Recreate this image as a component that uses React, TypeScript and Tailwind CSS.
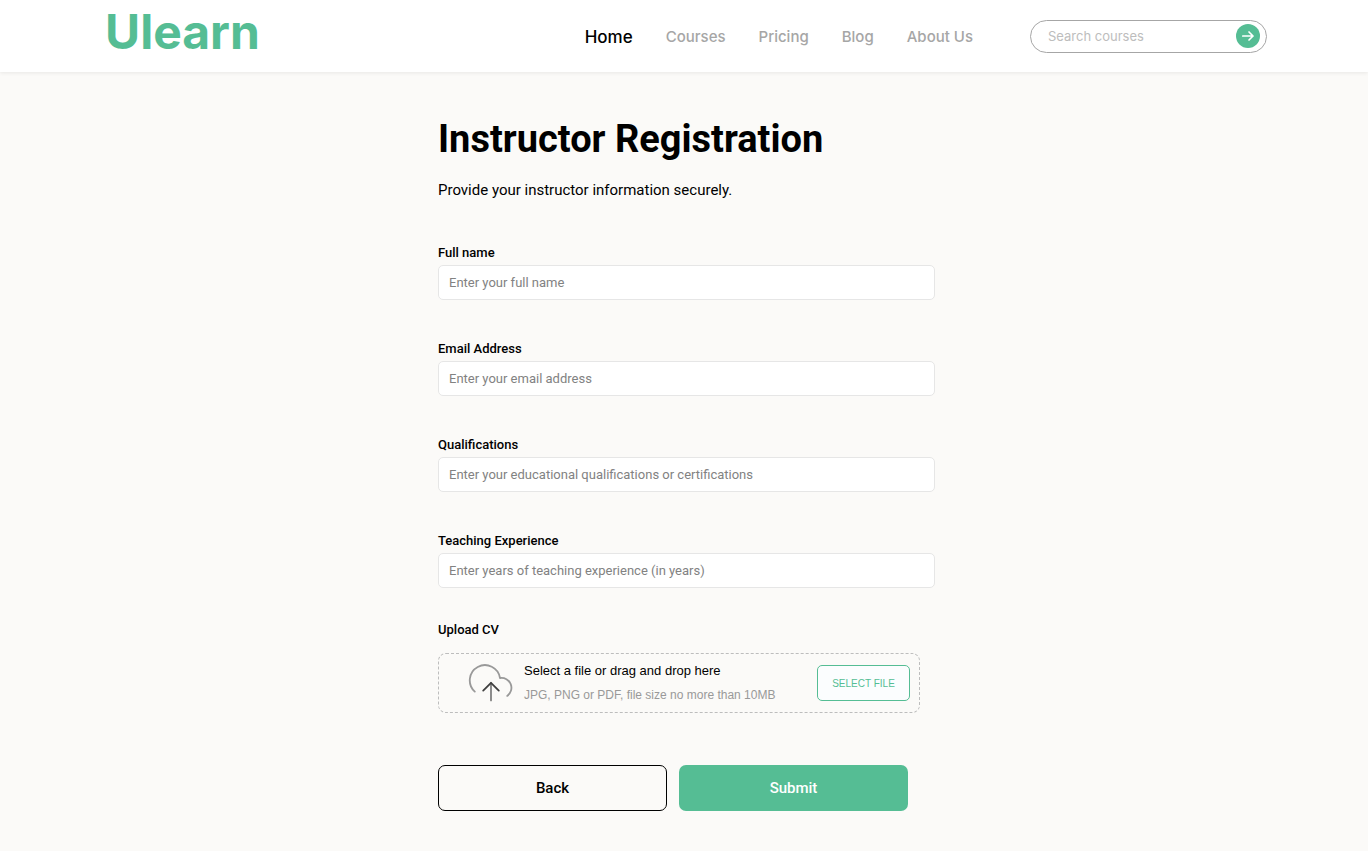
import { useRef } from "react";

const links = ["Courses", "Pricing", "Blog", "About Us"];

const fields = [
  { id: "full-name", label: "Full name", type: "text", placeholder: "Enter your full name" },
  { id: "email", label: "Email Address", type: "email", placeholder: "Enter your email address" },
  {
    id: "qualifications",
    label: "Qualifications",
    type: "text",
    placeholder: "Enter your educational qualifications or certifications",
  },
  {
    id: "experience",
    label: "Teaching Experience",
    type: "text",
    placeholder: "Enter years of teaching experience (in years)",
  },
];

function Header() {
  return (
    <header className="flex h-[72px] items-center justify-between bg-white pr-[101px] pl-[105px] font-['Inter',sans-serif] shadow-[0_1px_4px_rgba(0,0,0,0.08)]">
      <a href="#" className="pb-2 text-[48px] leading-[56px] font-bold text-[#55bd94]">
        Ulearn
      </a>
      <div className="flex items-center gap-[57px]">
        <nav className="flex items-center gap-[33px] pt-px text-[15px] leading-6 font-medium text-[#a6a6a6]">
          <a href="#" aria-current="page" className="text-[17px] text-black">
            Home
          </a>
          {links.map((link) => (
            <a key={link} href="#">
              {link}
            </a>
          ))}
        </nav>
        <form
          role="search"
          className="flex h-[33px] w-[237px] items-center rounded-full border border-[#a6a6a6] pr-[6px] pl-[17px]"
          onSubmit={(e) => e.preventDefault()}
        >
          <input
            type="search"
            aria-label="Search courses"
            placeholder="Search courses"
            className="min-w-0 flex-1 text-[13px] leading-5 outline-none placeholder:text-[#bdbdbd]"
          />
          <button
            type="submit"
            aria-label="Search"
            className="flex size-6 items-center justify-center rounded-full bg-[#55bd94]"
          >
            <svg viewBox="0 0 24 24" className="size-6" fill="none" stroke="white" strokeWidth="1.7" strokeLinecap="round" strokeLinejoin="round">
              <path d="M6.8 12h10.2M13 8l4 4-4 4" />
            </svg>
          </button>
        </form>
      </div>
    </header>
  );
}

function CloudUpload() {
  return (
    <svg viewBox="0 0 48 40" className="h-10 w-12 shrink-0" fill="none" strokeWidth="1.8" strokeLinecap="round" strokeLinejoin="round" aria-hidden="true">
      <path stroke="#999999" d="M6.8 28.6A15.2 15.2 0 1 1 32 15A9.9 9.9 0 0 1 39.2 32.9" />
      <path stroke="#808080" d="M23 37.4V20" />
      <path stroke="#404040" d="M15.2 27.6L23 19.8L30.8 27.6" />
    </svg>
  );
}

export default function App() {
  const fileInput = useRef<HTMLInputElement>(null);

  return (
    <div className="min-h-screen bg-[#fbfaf8] font-['Roboto',sans-serif] text-black">
      <Header />
      <main className="pt-[43px] pb-10 pl-[5px]">
        <form className="mx-auto max-w-[497px]" onSubmit={(e) => e.preventDefault()}>
          <h1 className="text-[38px] leading-[48px] font-bold">Instructor Registration</h1>
          <p className="mt-[15px] text-[15px] leading-6">Provide your instructor information securely.</p>

          <div className="mt-[41px] flex flex-col gap-[39px]">
            {fields.map((field) => (
              <div key={field.id} className="flex flex-col gap-[2px]">
                <label htmlFor={field.id} className="text-[13px] leading-5 font-medium">
                  {field.label}
                </label>
                <input
                  id={field.id}
                  type={field.type}
                  placeholder={field.placeholder}
                  className="h-[35px] rounded-[5px] border border-[#e6e6e6] bg-white px-[10px] text-[13px] outline-none placeholder:text-[#828282]"
                />
              </div>
            ))}
          </div>

          <label htmlFor="cv" className="mt-8 block text-[13px] leading-5 font-medium">
            Upload CV
          </label>
          <div className="mt-[13px] flex h-[60px] max-w-[482px] items-center rounded-lg border border-dashed border-[#bdbdbd] pr-[9px] pl-[29px] font-['Liberation_Sans',sans-serif]">
            <CloudUpload />
            <div className="ml-2 flex-1">
              <p className="text-[13px] leading-[25px]">Select a file or drag and drop here</p>
              <p className="text-[12px] leading-[25px] text-[#999999]">JPG, PNG or PDF, file size no more than 10MB</p>
            </div>
            <input ref={fileInput} id="cv" type="file" accept=".jpg,.png,.pdf" className="hidden" />
            <button
              type="button"
              onClick={() => fileInput.current?.click()}
              className="h-9 w-[93px] rounded-[5px] border border-[#55bd94] bg-[#fbfdfe] text-[10px] text-[#55bd94]"
            >
              SELECT FILE
            </button>
          </div>

          <div className="mt-[52px] grid max-w-[470px] grid-cols-2 gap-3 text-[15px] leading-6 font-medium">
            <button type="button" className="h-[46px] rounded-[7px] border border-black">
              Back
            </button>
            <button type="submit" className="h-[46px] rounded-[7px] bg-[#55bd94] text-white">
              Submit
            </button>
          </div>
        </form>
      </main>
    </div>
  );
}
